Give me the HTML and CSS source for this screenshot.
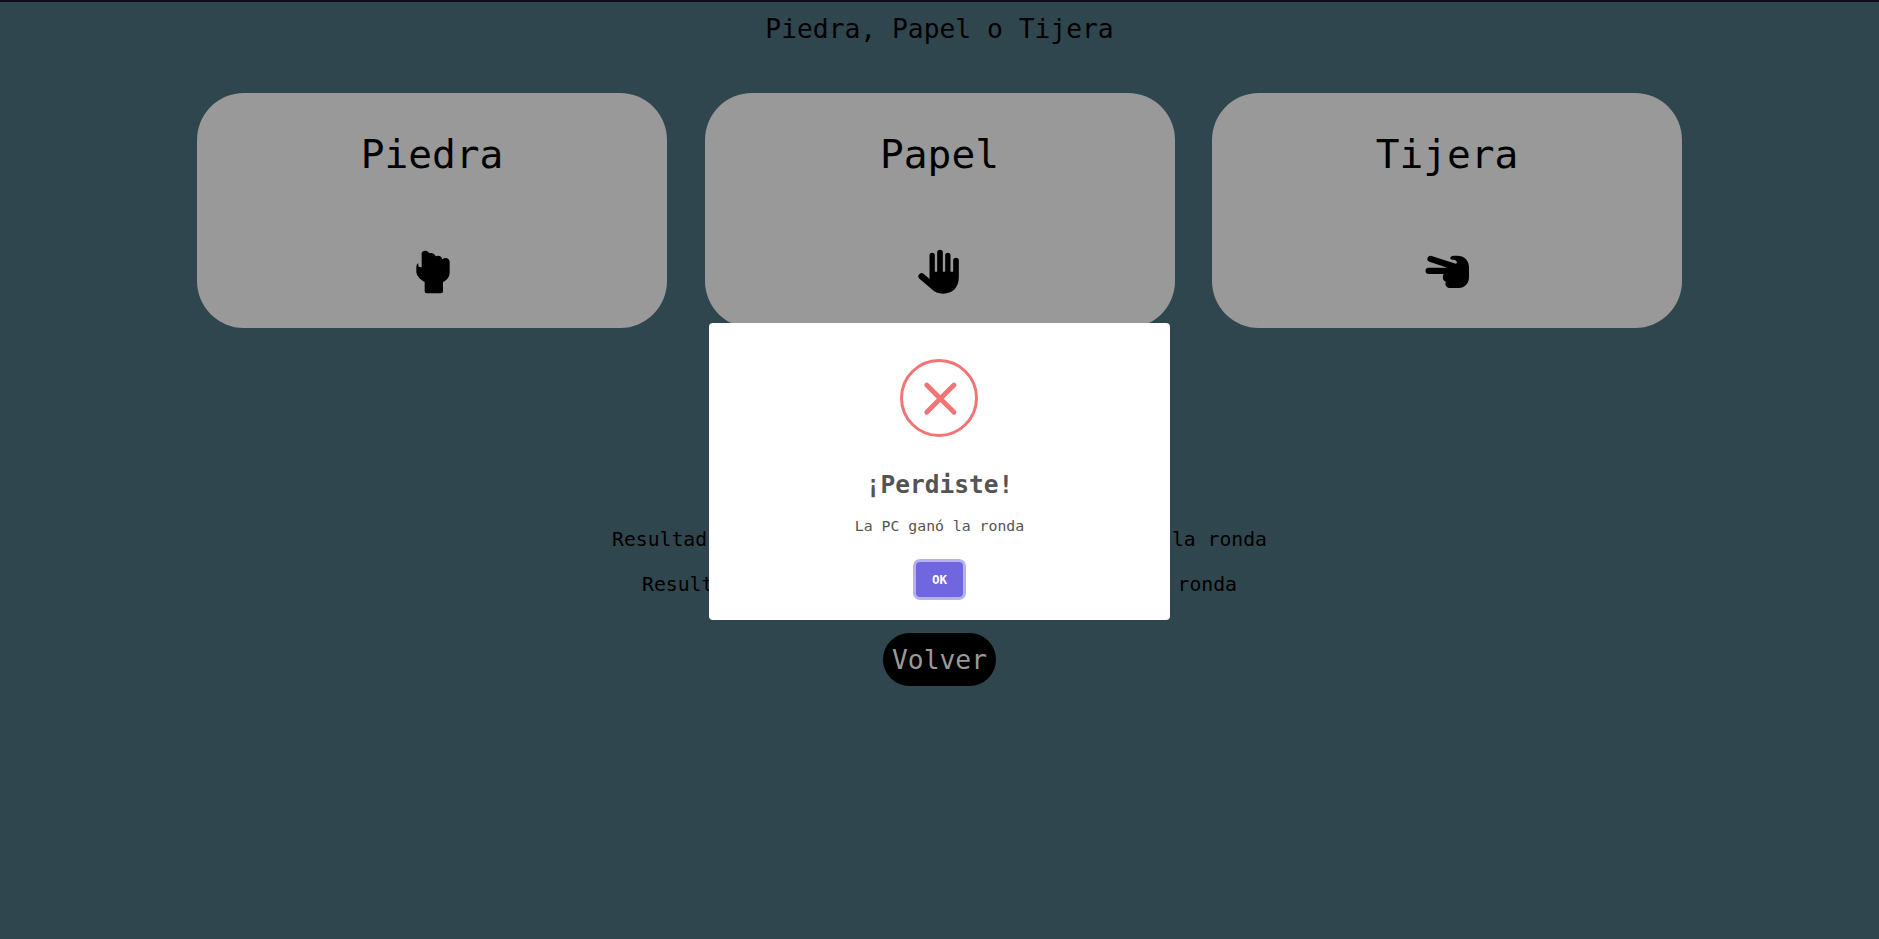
FILE: index.html
```html
<!DOCTYPE html>
<html lang="es">
<head>
<meta charset="utf-8">
<title>Piedra, Papel o Tijera</title>
<link rel="stylesheet" href="styles.css">
</head>
<body>
<main class="page">
  <h1 class="page-title">Piedra, Papel o Tijera</h1>
  <section class="cards">
    <article class="card">
      <h2 class="card-title">Piedra</h2>
      <svg class="hand" viewBox="24 27 144 138"><path d="M65 82V40C65 35 69 32 76 32C82 32 86 35 87 40C93 37 104 39 107 49C116 45 125 48 127 58C135 51 148 54 149 65V96C149 110 142 120 129 126V154Q129 160 123 160H80Q74 160 74 154V126C60 119 49 107 49 94V80Q49 72 55 69V78Q57 82 65 82Z"/></svg>
    </article>
    <article class="card">
      <h2 class="card-title">Papel</h2>
      <svg class="hand" viewBox="46.5 27 144 138"><path d="M87 117V46A8 8 0 0 1 103 46V95H110V38A8.500 8.500 0 0 1 127 38V95H134V46A8 8 0 0 1 150 46V95H158V62A8.500 8.500 0 0 1 175 62V112C175 144 155 161 128 161C113 161 102 156 93 147L58 117A9 9 0 0 1 69 101Z"/></svg>
    </article>
    <article class="card">
      <h2 class="card-title">Tijera</h2>
      <svg class="hand" viewBox="39 27 144 138"><path d="M65 48L137 71Q142 70 141 66Q138 59 130 59C122 60 118 55 122 51Q125 47 133 47H141C163 47 177 61 177 82V112C177 132 163 144 147 144H121C109 144 103 134 108 125C98 122 96 111 101 102H56A9.500 9.500 0 0 1 56 83H112L58 65A9 9 0 0 1 65 48Z"/></svg>
    </article>
  </section>
  <section class="results">
    <p class="result result-player"><span>Resultad</span><span>la ronda</span></p>
    <p class="result result-pc"><span>Result</span><span>ronda</span></p>
  </section>
  <button class="back">Volver</button>
</main>
<div class="overlay">
  <div class="modal" role="dialog">
    <svg class="error-icon" viewBox="0 0 78 78"><circle cx="39" cy="39" r="37.500" stroke-width="3"/><path d="M26.700 26L54 53.300M54 26L26.700 53.300" stroke-width="4.800"/></svg>
    <h2 class="modal-title">¡Perdiste!</h2>
    <p class="modal-text">La PC ganó la ronda</p>
    <button class="ok">OK</button>
  </div>
</div>
</body>
</html>
```
FILE: styles.css
```css
* { box-sizing: border-box; margin: 0; }
body {
  height: 939px;
  overflow: hidden;
  background: #30464e;
  color: #000;
  font-family: "DejaVu Sans Mono", monospace;
}
.page {
  display: flex;
  flex-direction: column;
  align-items: center;
  height: 939px;
  border-top: 2px solid #0d0c1b;
}
.page-title { font-size: 26.3px; font-weight: 400; line-height: 54px; }
.cards {
  display: grid;
  grid-template-columns: repeat(3, 1fr);
  gap: 37.5px;
  width: 1485px;
  margin-top: 37px;
}
.card {
  display: flex;
  flex-direction: column;
  align-items: center;
  gap: 71px;
  height: 235px;
  padding-top: 37px;
  border-radius: 47px;
  background: #999;
}
.card-title { font-size: 39.5px; font-weight: 400; line-height: 48px; }
.hand { width: 48px; height: 46px; }
.results {
  display: flex;
  flex-direction: column;
  align-items: center;
  margin-top: 189px;
}
.result {
  display: flex;
  justify-content: space-between;
  font-size: 19.75px;
  line-height: 45px;
}
.result-player { width: 655px; }
.result-pc { width: 595px; }
.back {
  width: 113px;
  height: 53px;
  margin-top: 26px;
  padding: 2px 0 0;
  border: 0;
  border-radius: 27px;
  background: #000;
  color: #999;
  font: 26.3px/51px "DejaVu Sans Mono", monospace;
}
.overlay {
  position: absolute;
  inset: 0;
  display: flex;
  justify-content: center;
  align-items: flex-start;
  padding-top: 323px;
}
.modal {
  display: flex;
  flex-direction: column;
  align-items: center;
  width: 461px;
  height: 297px;
  padding-top: 36px;
  border-radius: 4px;
  background: #fff;
}
.error-icon {
  width: 78px;
  height: 78px;
  margin-right: 2px;
  fill: none;
  stroke: #f27474;
  stroke-linecap: round;
}
.modal-title {
  margin-top: 28px;
  color: #545454;
  font-size: 24.5px;
  font-weight: 700;
  line-height: 40px;
}
.modal-text {
  margin-top: 9px;
  color: #545454;
  font-size: 14.8px;
  line-height: 24px;
}
.ok {
  width: 47px;
  height: 35px;
  margin-top: 24px;
  padding: 0;
  border: 0;
  border-radius: 4px;
  background: #7066e0;
  box-shadow: 0 0 0 3px #b7b2ef;
  color: #fff;
  font: 700 12.5px/35px "DejaVu Sans Mono", monospace;
}
```
